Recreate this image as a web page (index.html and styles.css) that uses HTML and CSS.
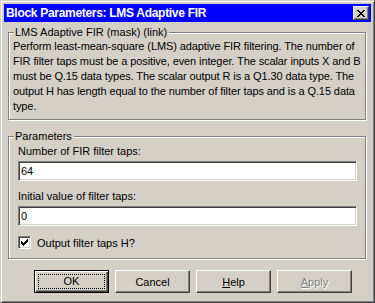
FILE: index.html
```html
<!DOCTYPE html>
<html lang="en">

<head>
    <meta charset="UTF-8">
    <title>Block Parameters: LMS Adaptive FIR</title>
    <link rel="stylesheet" href="styles.css">
</head>

<body>
    <div class="window">
        <div class="titlebar">
            <span class="title">Block Parameters: LMS Adaptive FIR</span>
            <button class="close-btn" aria-label="Close">
                <svg width="8" height="7" viewBox="0 0 8 7">
                    <path d="M0 0h2v1h-2zM6 0h2v1h-2zM1 1h2v1h-2zM5 1h2v1h-2zM2 2h4v1h-4zM3 3h2v1h-2zM2 4h4v1h-4zM1 5h2v1h-2zM5 5h2v1h-2zM0 6h2v1h-2zM6 6h2v1h-2z" fill="#000" />
                </svg>
            </button>
        </div>

        <div class="content">
            <div class="group group-desc">
                <span class="group-title">LMS Adaptive FIR (mask) (link)</span>
                <p class="desc">Perform least-mean-square (LMS) adaptive FIR filtering. The number of<br>FIR filter taps must be a positive, even integer. The scalar inputs X and B<br>must be Q.15 data types. The scalar output R is a Q1.30 data type. The<br>output H has length equal to the number of filter taps and is a Q.15 data<br>type.</p>
            </div>

            <div class="group group-params">
                <span class="group-title">Parameters</span>
                <label class="field-label">Number of FIR filter taps:</label>
                <input class="field" type="text" value="64">
                <label class="field-label">Initial value of filter taps:</label>
                <input class="field" type="text" value="0">
                <label class="check-row">
                    <span class="checkbox">
                        <svg width="7" height="7" viewBox="0 0 7 7">
                            <path d="M6 0h1v3h-1zM5 1h1v3h-1zM4 2h1v3h-1zM3 3h1v3h-1zM2 4h1v3h-1zM1 3h1v3h-1zM0 2h1v3h-1z" fill="#000" />
                        </svg>
                    </span>
                    Output filter taps H?
                </label>
            </div>

            <div class="buttons">
                <button class="btn default"><span class="focus">OK</span></button>
                <button class="btn">Cancel</button>
                <button class="btn"><u>H</u>elp</button>
                <button class="btn disabled"><u>A</u>pply</button>
            </div>
        </div>
    </div>
</body>

</html>
```

FILE: styles.css
```css
body {
    margin: 0;
    background: #d4d0c8;
    font-family: 'Liberation Sans', Arial, sans-serif;
    font-size: 11px;
    color: #000;
}

.window {
    width: 375px;
    height: 303px;
    box-sizing: border-box;
    padding: 2px;
    background: #d4d0c8;
    border: 1px solid;
    border-color: #d4d0c8 #404040 #404040 #d4d0c8;
    box-shadow: inset 1px 1px 0 #fff, inset -1px -1px 0 #808080;
}

.titlebar {
    height: 18px;
    margin: 1px;
    background: #0000ff;
    display: flex;
    align-items: center;
    justify-content: space-between;
    padding: 0 2px 0 2px;
}

.title {
    color: #fff;
    font-weight: bold;
    font-size: 12px;
    letter-spacing: -0.3px;
}

.close-btn {
    width: 16px;
    height: 14px;
    padding: 0;
    background: #d4d0c8;
    border: 1px solid;
    border-color: #fff #404040 #404040 #fff;
    box-shadow: inset -1px -1px 0 #808080;
    display: flex;
    align-items: center;
    justify-content: center;
}

.content {
    padding: 9px 6px 0 5px;
}

.group {
    position: relative;
    border: 1px solid #808080;
    box-shadow: inset 1px 1px 0 #fff, 1px 1px 0 #fff;
}

.group-title {
    position: absolute;
    top: -7px;
    left: 5px;
    padding: 0 2px 0 1px;
    background: #d4d0c8;
    line-height: 13px;
}

.group-desc {
    height: 88px;
    box-sizing: border-box;
    padding: 6px 4px 0 4px;
}

.desc {
    margin: 0;
    line-height: 15px;
    white-space: nowrap;
    letter-spacing: -0.1px;
}

.group-params {
    margin-top: 16px;
    height: 123px;
    box-sizing: border-box;
    padding: 7px 8px 0 9px;
    display: flex;
    flex-direction: column;
}

.field-label {
    line-height: 15px;
    height: 15px;
    margin-bottom: 2px;
}

.field {
    height: 20px;
    box-sizing: border-box;
    margin: 0 0 8px 0;
    padding: 0 2px;
    font: inherit;
    background: #fff;
    border: 1px solid;
    border-color: #808080 #fff #fff #808080;
    box-shadow: inset 1px 1px 0 #404040, inset -1px -1px 0 #d4d0c8;
    outline: none;
}

.check-row {
    display: flex;
    align-items: center;
    gap: 6px;
    height: 15px;
    margin-top: 1px;
}

.checkbox {
    width: 13px;
    height: 13px;
    box-sizing: border-box;
    background: #fff;
    border: 1px solid;
    border-color: #808080 #fff #fff #808080;
    box-shadow: inset 1px 1px 0 #404040, inset -1px -1px 0 #d4d0c8;
    display: flex;
    align-items: center;
    justify-content: center;
}

.buttons {
    display: flex;
    gap: 6px;
    padding: 11px 0 0 26px;
}

.btn {
    width: 75px;
    height: 23px;
    padding: 0;
    font: inherit;
    color: #000;
    background: #d4d0c8;
    border: 1px solid;
    border-color: #fff #404040 #404040 #fff;
    box-shadow: inset -1px -1px 0 #808080;
}

.btn.default {
    border-color: #000;
    box-shadow: inset 1px 1px 0 #fff, inset -1px -1px 0 #404040, inset -2px -2px 0 #808080;
    display: flex;
    align-items: center;
    justify-content: center;
}

.focus {
    width: 67px;
    height: 15px;
    line-height: 13px;
    border: 1px dotted #000;
    box-sizing: border-box;
}

.btn.disabled {
    color: #808080;
    text-shadow: 1px 1px 0 #fff;
}
```
